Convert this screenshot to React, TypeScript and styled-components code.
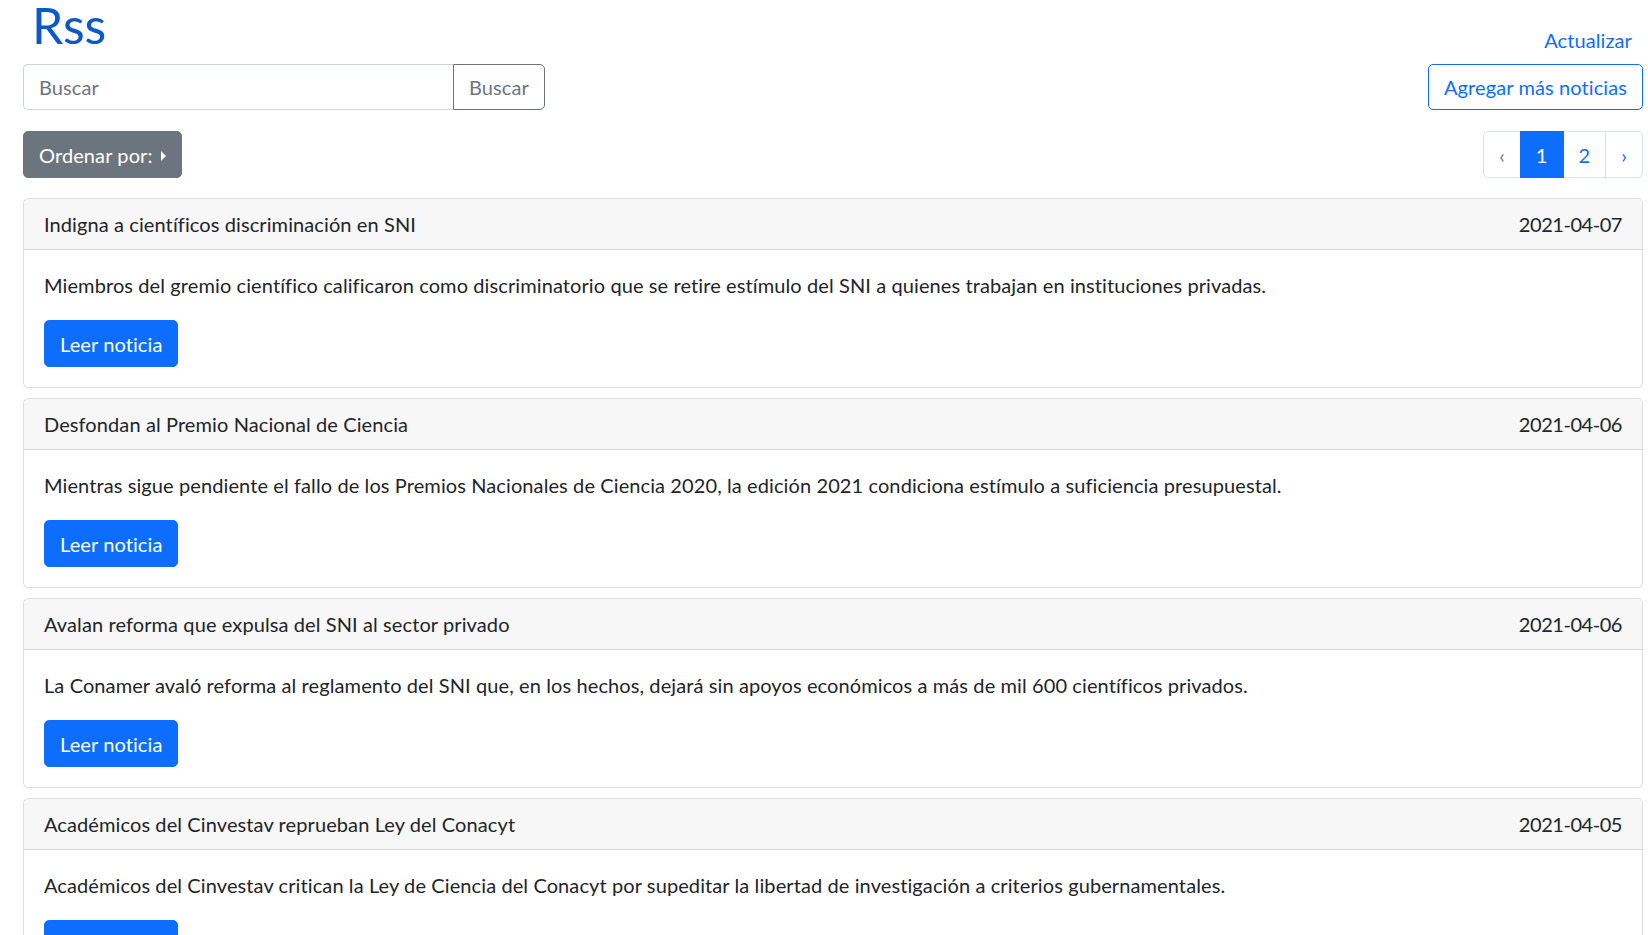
import React from "react";
import styled, { createGlobalStyle } from "styled-components";

const GlobalStyle = createGlobalStyle`
  html, body {
    margin: 0;
    padding: 0;
    background: #ffffff;
  }
  body {
    font-family: "Segoe UI", Lato, "Noto Sans", sans-serif;
    font-size: 20px;
    line-height: 1.5;
    letter-spacing: 0.1px;
    color: #212529;
    overflow: hidden;
  }
  * { box-sizing: border-box; }
`;

const Page = styled.div`
  height: 100vh;
  overflow: hidden;
  padding: 0 5px 0 23px;
`;

const TitleRow = styled.header`
  display: flex;
  justify-content: space-between;
  align-items: flex-start;
  height: 64px;
`;

const Title = styled.h1`
  margin: 0 0 0 9px;
  font-size: 50px;
  line-height: 50px;
  font-weight: 400;
  letter-spacing: 0;
  color: #0a58ca;
`;

const RefreshLink = styled.a`
  margin: 25px 11px 0 0;
  font-size: 20px;
  line-height: 30px;
  color: #0d6efd;
  text-decoration: none;
  cursor: pointer;
`;

const ToolRow = styled.div<{ $height: number; $gap: number }>`
  display: flex;
  justify-content: space-between;
  align-items: center;
  height: ${(p) => p.$height}px;
  margin-bottom: ${(p) => p.$gap}px;
`;

const InputGroup = styled.form`
  display: flex;
  height: 100%;
`;

const SearchInput = styled.input`
  width: 430px;
  height: 100%;
  padding: 0 15px;
  font: inherit;
  font-size: 20px;
  letter-spacing: 0.1px;
  color: #212529;
  border: 1px solid #ced4da;
  border-right: none;
  border-radius: 5px 0 0 5px;
  outline: none;
  &::placeholder {
    color: #6c757d;
  }
`;

const Button = styled.button<{ $variant: "primary" | "secondary" | "outline-primary" | "outline-secondary" }>`
  display: inline-flex;
  align-items: center;
  height: 100%;
  padding: 0 15px;
  font: inherit;
  font-size: 20px;
  line-height: 30px;
  letter-spacing: 0.1px;
  border-radius: 5px;
  cursor: pointer;
  white-space: nowrap;
  border: 1px solid
    ${(p) =>
      p.$variant === "primary" || p.$variant === "outline-primary" ? "#0d6efd" : "#6c757d"};
  background: ${(p) =>
    p.$variant === "primary" ? "#0d6efd" : p.$variant === "secondary" ? "#6c757d" : "#ffffff"};
  color: ${(p) =>
    p.$variant === "primary" || p.$variant === "secondary"
      ? "#ffffff"
      : p.$variant === "outline-primary"
      ? "#0d6efd"
      : "#6c757d"};
`;

const SearchButton = styled(Button)`
  border-radius: 0 5px 5px 0;
`;

const Caret = styled.span`
  display: inline-block;
  margin-left: 8px;
  width: 0;
  height: 0;
  border-top: 5px solid transparent;
  border-bottom: 5px solid transparent;
  border-left: 5px solid currentColor;
  margin-top: 2px;
`;

const Pagination = styled.nav`
  display: flex;
  height: 100%;
`;

const PageLink = styled.a<{ $active?: boolean; $disabled?: boolean }>`
  display: flex;
  align-items: center;
  justify-content: center;
  height: 100%;
  padding: 0 15px;
  font-size: 20px;
  line-height: 30px;
  text-decoration: none;
  border: 1px solid ${(p) => (p.$active ? "#0d6efd" : "#dee2e6")};
  margin-left: -1px;
  background: ${(p) => (p.$active ? "#0d6efd" : "#ffffff")};
  color: ${(p) => (p.$active ? "#ffffff" : p.$disabled ? "#6c757d" : "#0d6efd")};
  position: relative;
  z-index: ${(p) => (p.$active ? 1 : 0)};
  &:first-child {
    margin-left: 0;
    border-radius: 5px 0 0 5px;
  }
  &:last-child {
    border-radius: 0 5px 5px 0;
  }
`;

const CardList = styled.div`
  display: flex;
  flex-direction: column;
  gap: 10px;
`;

const Card = styled.article`
  border: 1px solid rgba(0, 0, 0, 0.125);
  border-radius: 5px;
  overflow: hidden;
  flex-shrink: 0;
`;

const CardHeader = styled.div`
  display: flex;
  justify-content: space-between;
  align-items: center;
  padding: 10px 20px;
  line-height: 30px;
  background: #f7f7f7;
  border-bottom: 1px solid rgba(0, 0, 0, 0.125);
`;

const CardDate = styled.span`
  letter-spacing: -0.45px;
`;

const CardBody = styled.div`
  padding: 20px;
`;

const CardText = styled.p`
  margin: 0 0 20px;
  line-height: 30px;
`;

const ReadButton = styled(Button)`
  height: 47px;
`;

const news = [
  {
    title: "Indigna a científicos discriminación en SNI",
    date: "2021-04-07",
    summary:
      "Miembros del gremio científico calificaron como discriminatorio que se retire estímulo del SNI a quienes trabajan en instituciones privadas.",
  },
  {
    title: "Desfondan al Premio Nacional de Ciencia",
    date: "2021-04-06",
    summary:
      "Mientras sigue pendiente el fallo de los Premios Nacionales de Ciencia 2020, la edición 2021 condiciona estímulo a suficiencia presupuestal.",
  },
  {
    title: "Avalan reforma que expulsa del SNI al sector privado",
    date: "2021-04-06",
    summary:
      "La Conamer avaló reforma al reglamento del SNI que, en los hechos, dejará sin apoyos económicos a más de mil 600 científicos privados.",
  },
  {
    title: "Académicos del Cinvestav reprueban Ley del Conacyt",
    date: "2021-04-05",
    summary:
      "Académicos del Cinvestav critican la Ley de Ciencia del Conacyt por supeditar la libertad de investigación a criterios gubernamentales.",
  },
];

export default function App() {
  return (
    <>
      <GlobalStyle />
      <Page>
        <TitleRow>
          <Title>Rss</Title>
          <RefreshLink>Actualizar</RefreshLink>
        </TitleRow>
        <ToolRow $height={46} $gap={21}>
          <InputGroup onSubmit={(e) => e.preventDefault()}>
            <SearchInput placeholder="Buscar" />
            <SearchButton type="submit" $variant="outline-secondary">
              Buscar
            </SearchButton>
          </InputGroup>
          <Button $variant="outline-primary">Agregar más noticias</Button>
        </ToolRow>
        <ToolRow $height={47} $gap={20}>
          <Button $variant="secondary">
            Ordenar por:
            <Caret />
          </Button>
          <Pagination>
            <PageLink $disabled>‹</PageLink>
            <PageLink $active>1</PageLink>
            <PageLink>2</PageLink>
            <PageLink>›</PageLink>
          </Pagination>
        </ToolRow>
        <CardList>
          {news.map((n) => (
            <Card key={n.title}>
              <CardHeader>
                <span>{n.title}</span>
                <CardDate>{n.date}</CardDate>
              </CardHeader>
              <CardBody>
                <CardText>{n.summary}</CardText>
                <ReadButton $variant="primary">Leer noticia</ReadButton>
              </CardBody>
            </Card>
          ))}
        </CardList>
      </Page>
    </>
  );
}
